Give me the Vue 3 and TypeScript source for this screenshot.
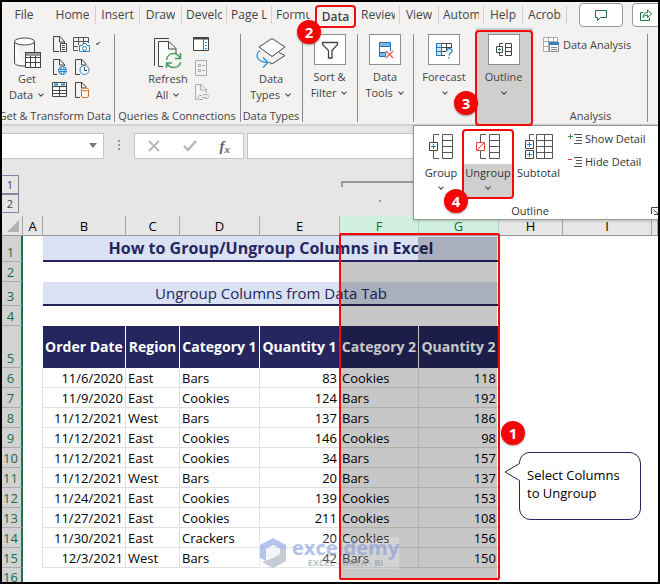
<script setup lang="ts">
interface Tab {
  label: string
  active?: boolean
  plain?: boolean
}

interface Order {
  date: string
  region: string
  category1: string
  quantity1: number
  category2: string
  quantity2: number
}

const tabs: Tab[] = [
  { label: 'File', plain: true },
  { label: 'Home' },
  { label: 'Insert' },
  { label: 'Draw' },
  { label: 'Develo' },
  { label: 'Page L' },
  { label: 'Formu', plain: true },
  { label: 'Data', active: true, plain: true },
  { label: 'Review' },
  { label: 'View' },
  { label: 'Autom' },
  { label: 'Help' },
  { label: 'Acrob' },
]

const columns = ['A', 'B', 'C', 'D', 'E', 'F', 'G', 'H', 'I']
const headings = ['Order Date', 'Region', 'Category 1', 'Quantity 1', 'Category 2', 'Quantity 2']

const orders: Order[] = [
  { date: '11/6/2020', region: 'East', category1: 'Bars', quantity1: 83, category2: 'Cookies', quantity2: 118 },
  { date: '11/9/2020', region: 'East', category1: 'Cookies', quantity1: 124, category2: 'Bars', quantity2: 192 },
  { date: '11/12/2021', region: 'West', category1: 'Bars', quantity1: 137, category2: 'Bars', quantity2: 186 },
  { date: '11/12/2021', region: 'East', category1: 'Cookies', quantity1: 146, category2: 'Cookies', quantity2: 98 },
  { date: '11/12/2021', region: 'East', category1: 'Cookies', quantity1: 34, category2: 'Bars', quantity2: 157 },
  { date: '11/12/2021', region: 'West', category1: 'Bars', quantity1: 20, category2: 'Bars', quantity2: 137 },
  { date: '11/24/2021', region: 'East', category1: 'Cookies', quantity1: 139, category2: 'Cookies', quantity2: 153 },
  { date: '11/27/2021', region: 'East', category1: 'Cookies', quantity1: 211, category2: 'Cookies', quantity2: 108 },
  { date: '11/30/2021', region: 'East', category1: 'Crackers', quantity1: 20, category2: 'Cookies', quantity2: 156 },
  { date: '12/3/2021', region: 'West', category1: 'Bars', quantity1: 42, category2: 'Bars', quantity2: 150 },
]
</script>

<template>
  <main class="window">
    <nav class="tabs">
      <button v-for="tab in tabs" :key="tab.label" class="tab" :class="{ active: tab.active, plain: tab.plain }">
        <span>{{ tab.label }}</span>
      </button>
      <div class="actions">
        <button class="action" aria-label="Comments">
          <svg width="14" height="14" viewBox="0 0 14 14" fill="none" stroke="#217346"><path d="M1.500 2.500H12.500V9.500H6.500L3.500 12.500V9.500H1.500Z" /></svg>
        </button>
        <button class="action share" aria-label="Share">
          <svg width="14" height="14" viewBox="0 0 14 14" fill="none" stroke="#217346"><path d="M4.500 4.500H1.500V12.500H10.500V9.500M4 9.500C4.500 6 6 4.500 8.500 4.500V2L12.500 5.700L8.500 9.500V7C6.500 7 5 7.800 4 9.500Z" /></svg>
        </button>
      </div>
    </nav>

    <section class="ribbon">
      <div class="group get-group">
        <div class="tools">
          <button class="big">
            <svg width="28" height="33" viewBox="15 37 28 33" fill="none" stroke="#444">
              <path d="M16.500 41.500V63C17 65 21 66 27 66M36.500 41.500V52" fill="#fafafa" />
              <ellipse cx="26.500" cy="41.500" rx="10" ry="3.500" fill="#fff" />
              <path d="M27.500 52.500H42.500V67.500H27.500Z" fill="#fff" /><path d="M28 54.500H42" stroke="#999" stroke-width="3" />
              <path d="M27.500 57.500H42.500M27.500 62.500H42.500M32.500 56V67M37.500 56V67M27.500 52.500H42.500V67.500H27.500Z" />
            </svg>
            <span>Get</span><span>Data <i class="chevron"></i></span>
          </button>
          <div class="smalls pair">
            <button aria-label="From text">
              <svg width="18" height="18" viewBox="51 35 18 18" fill="none" stroke="#444"><path d="M59 51.500H53.500V36.500H60L64.500 41.500V43M59.500 36.500V42H64" /><path d="M60.500 43.500H66.500V51.500H60.500Z" fill="#fff" /><path d="M62 45.500H65M62 47.500H65M62 49.500H65" /></svg>
            </button>
            <button class="with-chevron" aria-label="From picture">
              <svg width="18" height="18" viewBox="73 35 18 18" fill="none" stroke="#555"><path d="M73.500 37.500H88.500V43M73.500 37.500V50.500H78M73.500 41.500H88.500M73.500 46.500H78M78.500 37V45M83.500 37V43" /><path d="M79.500 45.500H82L83 43.500H86L87 45.500H89.500V51.500H79.500Z" fill="#fff" stroke="#2483cc" /><circle cx="84.500" cy="48.500" r="2" stroke="#2483cc" /></svg>
              <i class="chevron"></i>
            </button>
            <button aria-label="From web">
              <svg width="18" height="18" viewBox="51 58 18 18" fill="none" stroke="#444"><path d="M57 74.500H53.500V59.500H60L64.500 64.500V66M59.500 59.500V65H64" /><circle cx="62.500" cy="70.500" r="4" fill="#fff" stroke="#2483cc" /><ellipse cx="62.500" cy="70.500" rx="1.700" ry="4" stroke="#2483cc" /><path d="M58.500 69.500H66.500M58.500 71.500H66.500" stroke="#2483cc" /></svg>
            </button>
            <button aria-label="Recent sources">
              <svg width="18" height="18" viewBox="73 58 18 18" fill="none" stroke="#444"><path d="M80 74.500H75.500V59.500H82L86.500 64.500M81.500 59.500V65H86" /><circle cx="84.500" cy="70" r="4.500" fill="#fff" stroke="#2483cc" /><path d="M84.500 67V70.500H87" /></svg>
            </button>
            <button aria-label="From table">
              <svg width="18" height="18" viewBox="50 81 18 18" fill="none" stroke="#444"><path d="M51.500 82.500H65.500V96.500H51.500Z" fill="#fff" /><path d="M51.500 86.500H65.500M51.500 90.500H65.500M51.500 93.500H65.500M58.500 87V96" /><path d="M53 84.500H57M60 84.500H64" stroke="#2483cc" stroke-width="2" /></svg>
            </button>
            <button aria-label="Existing connections">
              <svg width="18" height="18" viewBox="73 81 18 18" fill="none" stroke="#444"><path d="M80 97.500H75.500V82.500H82L86.500 87.500M81.500 82.500V88H86" /><path d="M81.500 89.500V96.500C82 98 88 98 88.500 96.500V89.500" fill="#fff" stroke="#d96a12" /><ellipse cx="85" cy="89.500" rx="3.500" ry="1.500" fill="#fff" stroke="#d96a12" /></svg>
            </button>
          </div>
        </div>
        <footer>Get &amp; Transform Data</footer>
      </div>

      <div class="group query-group">
        <div class="tools">
          <button class="big">
            <svg width="30" height="33" viewBox="155 37 30 33" fill="none" stroke="#444">
              <path d="M157 65.500H156.500V38.500H171" /><path d="M165 66.500H160.500V41.500H171L178 48.500V54M170.500 41.500V49H178" fill="#fafafa" />
              <path d="M168.500 60C169 56 172 53.500 175.500 53.500C178.500 53.500 180.500 55 182 58M182.500 53V58.500H177M182.500 62C182 65.500 179 67.500 175.500 67.500C172.500 67.500 170.500 66 169 63.500M168.500 68V63H174" stroke="#3fa45b" stroke-width="1.500" />
            </svg>
            <span>Refresh</span><span>All <i class="chevron"></i></span>
          </button>
          <div class="smalls">
            <button aria-label="Queries pane">
              <svg width="18" height="18" viewBox="191 36 18 18" fill="none" stroke="#444"><path d="M192.500 38.500H207.500V51.500H192.500Z" fill="#fff" /><path d="M192 39.500H208" stroke-width="2" /><path d="M202.500 40V51M204 43.500H206M204 46.500H206M204 49.500H206" stroke="#2483cc" /></svg>
            </button>
            <button aria-label="Properties" disabled>
              <svg width="18" height="18" viewBox="191 59 18 18" fill="none" stroke="#aaa"><path d="M194.500 61.500H205.500V76.500H194.500Z" /><path d="M197.500 65.500H199.500V67.500H197.500ZM197.500 70.500H199.500V72.500H197.500ZM201 66.500H204M201 71.500H204" /></svg>
            </button>
            <button aria-label="Edit links" disabled>
              <svg width="18" height="19" viewBox="191 82 18 19" fill="none" stroke="#aaa"><path d="M197 100.500H194.500V85.500H200L205.500 90.500V94M199.500 85.500V91H205" /><path d="M201 96.500H199C196.500 97 196.500 100 199 100.500H202M202 95.500H206C208 96 208 99 206 99.500H204M201 98.500H205" /></svg>
            </button>
          </div>
        </div>
        <footer>Queries &amp; Connections</footer>
      </div>

      <div class="group">
        <div class="tools">
          <button class="big">
            <svg width="32" height="33" viewBox="254 37 32 33" fill="none" stroke="#444">
              <path d="M271 38.500L284 47L271 56.500L258 47Z" fill="#fafafa" /><path d="M278 52.500L284 55.500L271 64L268 62" />
              <path d="M259 50.500C254 54 255 62.500 267 62.500M262 57.500L267 62.500L262 67.500" stroke="#2f91d8" stroke-width="1.300" />
            </svg>
            <span>Data</span><span>Types <i class="chevron"></i></span>
          </button>
        </div>
        <footer>Data Types</footer>
      </div>

      <div class="group">
        <button class="tile-button">
          <span class="tile"><svg width="24" height="24" viewBox="318 37 24 24" fill="none" stroke="#444" stroke-width="1.300"><path d="M322.500 41.500H337.500V43.500L332 49.500V57H328.500V49.500L322.500 43.500Z" /></svg></span>
          <span>Sort &amp;</span><span>Filter <i class="chevron"></i></span>
        </button>
      </div>

      <div class="group">
        <button class="tile-button">
          <span class="tile"><svg width="24" height="24" viewBox="373 37 24 24" fill="none"><path d="M379.500 41.500H390.500V45.500H379.500ZM379.500 51.500H385.500V55.500H379.500Z" fill="#78b8e8" stroke="#1f6eb5" /><path d="M379.500 45.500V51.500H385M390.500 45.500V50" stroke="#1f6eb5" /><path d="M386 50L393 57M393 50L386 57" stroke="#ee5558" stroke-width="1.300" /></svg></span>
          <span>Data</span><span>Tools <i class="chevron"></i></span>
        </button>
      </div>

      <div class="group unruled">
        <button class="tile-button">
          <span class="tile"><svg width="24" height="24" viewBox="432 37 24 24" fill="none"><path d="M436.500 42.500H451.500V47M436.500 42.500V54.500H445M436.500 46.500H451.500M436.500 50.500H446M441.500 42V54M446.500 42V50" stroke="#444" /><path d="M436.500 42.500H441.500V54.500H436.500Z" fill="#cce5f7" stroke="#2374bb" /><path d="M437 46.500H441M437 50.500H441" stroke="#2374bb" /><path d="M446.500 50.500C446.500 47 452 46.500 452 50C452 52 449 52 449 54.500M449 56V57.500" stroke="#2483cc" stroke-width="1.300" /></svg></span>
          <span>Forecast</span><span><i class="chevron"></i></span>
        </button>
      </div>

      <div class="group unruled outline-group">
        <button class="tile-button">
          <span class="tile"><svg width="24" height="24" viewBox="492 37 24 24" fill="none" stroke="#444"><path d="M496.500 45.500H502.500V51.500H496.500Z" fill="#fff" /><path d="M498 48.500H501M499.500 47V50" stroke="#2483cc" /><path d="M499.500 45V42.500H503M499.500 52V54.500H503M505.500 42.500H511.500V54.500H505.500ZM505.500 46.500H511.500M505.500 50.500H511.500" /></svg></span>
          <span>Outline</span><span><i class="chevron"></i></span>
        </button>
      </div>

      <div class="group analysis-group">
        <button class="analysis">
          <svg width="17" height="16" viewBox="544 37 17 16" fill="none" stroke="#aaa"><path d="M544.500 37.500H558.500V51.500H544.500ZM544.500 41.500H558.500M544.500 46.500H558.500M549.500 37V51M554.500 37V51" fill="#fff" /><path d="M550.500 43.500H559.500V51.500H550.500ZM552 47.500H558M552 49.500H558" fill="#fff" stroke="#888" /><path d="M550 43.500H560" stroke="#3382bd" stroke-width="3" /></svg>
          Data Analysis
        </button>
        <footer>Analysis</footer>
      </div>
    </section>

    <section class="formula-bar">
      <div class="name-box">
        <input type="text" aria-label="Name box" />
        <svg width="8" height="5" viewBox="0 0 8 5"><path d="M0 0H8L4 5Z" fill="#777" /></svg>
      </div>
      <svg class="dots" width="3" height="11" viewBox="0 0 3 11" fill="#999"><path d="M0 0H2V2H0ZM0 4H2V6H0ZM0 8H2V10H0Z" /></svg>
      <div class="entry-buttons">
        <button aria-label="Cancel"><svg width="12" height="12" viewBox="0 0 12 12"><path d="M1 1L11 11M11 1L1 11" stroke="#b9b9b9" stroke-width="2" /></svg></button>
        <button aria-label="Enter"><svg width="14" height="12" viewBox="0 0 14 12"><path d="M1 6L5 10L13 1" fill="none" stroke="#b9b9b9" stroke-width="2.500" /></svg></button>
        <button class="fx">f<sub>x</sub></button>
      </div>
      <input class="formula" type="text" aria-label="Formula" />
    </section>

    <section class="levels">
      <div class="level-buttons"><button>1</button><button>2</button></div>
      <div class="bracket"><i></i></div>
    </section>

    <section class="sheet">
      <table>
        <colgroup>
          <col class="w-row" /><col class="w-a" /><col class="w-b" /><col class="w-c" /><col class="w-d" /><col class="w-d" />
          <col class="w-f" /><col class="w-d" /><col class="w-h" /><col class="w-i" /><col />
        </colgroup>
        <thead>
          <tr class="letters">
            <th><svg width="12" height="12" viewBox="0 0 12 12"><path d="M12 0V12H0Z" fill="#b2b2b2" /></svg></th>
            <th v-for="c in columns" :key="c" :class="{ picked: c === 'F' || c === 'G' }" scope="col">{{ c }}</th>
            <th></th>
          </tr>
        </thead>
        <tbody>
          <tr class="title-row"><th scope="row">1</th><td></td><td class="banner title" colspan="6">How to Group/Ungroup Columns in Excel</td><td colspan="3"></td></tr>
          <tr class="short-row"><th scope="row">2</th><td colspan="10"></td></tr>
          <tr class="subtitle-row"><th scope="row">3</th><td></td><td class="banner subtitle" colspan="6">Ungroup Columns from Data Tab</td><td colspan="3"></td></tr>
          <tr class="short-row"><th scope="row">4</th><td colspan="10"></td></tr>
          <tr class="heading-row">
            <th scope="row">5</th><td></td>
            <th v-for="h in headings" :key="h" class="heading" scope="col">{{ h }}</th>
            <td colspan="3"></td>
          </tr>
          <tr v-for="(o, i) in orders" :key="i" class="data-row">
            <th scope="row">{{ i + 6 }}</th>
            <td class="edge"></td>
            <td class="cell number">{{ o.date }}</td>
            <td class="cell">{{ o.region }}</td>
            <td class="cell">{{ o.category1 }}</td>
            <td class="cell number">{{ o.quantity1 }}</td>
            <td class="cell">{{ o.category2 }}</td>
            <td class="cell number">{{ o.quantity2 }}</td>
            <td colspan="3"></td>
          </tr>
          <tr class="last-row"><th scope="row"><div>16</div></th><td colspan="10"></td></tr>
        </tbody>
      </table>

      <div class="shade shade-f"></div>
      <div class="shade shade-g"></div>
      <div class="watermark">
        <svg width="28" height="32" viewBox="0 0 28 32"><path d="M14 1L27 8V15L14 8L7 12V24L1 21V8Z" fill="#8fa6e6" /><path d="M14 9L21 13V20L14 24L7 20V13Z" fill="#eef1f7" /><path d="M27 11V24L14 31L3 25L14 21L21 17V12Z" fill="#a9b1bf" /></svg>
        <div><strong>exceldemy</strong><small>EXCEL - DATA - BI</small></div>
      </div>
      <div class="selection"></div>
      <aside class="callout">
        <svg width="138" height="70" viewBox="0 0 138 70" fill="#fff" stroke="#26265e"><path d="M26 1.500H125A11 11 0 0 1 136.500 12V58A11 11 0 0 1 125 68.500H27A11 11 0 0 1 15.500 58V29.500L1 21L15.500 12.500C15.500 6 20 1.500 26 1.500Z" /></svg>
        <p>Select Columns<br />to Ungroup</p>
      </aside>
      <span class="badge badge-1">1</span>
    </section>

    <section class="popover">
      <div class="popover-tools">
        <button class="choice">
          <svg width="26" height="28" viewBox="429 131 26 28" fill="none" stroke="#555"><path d="M434.500 141V133.500H440M434.500 150V157.500H440M443.500 133.500H453.500V157.500H443.500ZM443.500 139.500H453.500M443.500 145.500H453.500M443.500 151.500H453.500" /><path d="M430.500 141.500H438.500V149.500H430.500Z" fill="#fff" stroke="#444" /><path d="M432 145.500H437M434.500 143V148" stroke="#2483cc" /></svg>
          <span>Group</span><i class="chevron"></i>
        </button>
        <button class="choice ungroup">
          <svg width="26" height="28" viewBox="476 131 26 28" fill="none" stroke="#555"><path d="M481.500 141V133.500H487M481.500 150V157.500H487M490.500 133.500H500.500V157.500H490.500ZM490.500 139.500H500.500M490.500 145.500H500.500M490.500 151.500H500.500" /><path d="M477.500 141.500H485.500V149.500H477.500ZM478 149L485 142" fill="#fff" stroke="#ed4545" /></svg>
          <span>Ungroup</span><i class="chevron"></i>
        </button>
        <button class="choice">
          <svg width="30" height="28" viewBox="524 131 30 28" fill="none" stroke="#555"><path d="M529.500 139V133.500H534M536.500 133.500H552.500V157.500H536.500ZM536.500 139.500H552.500M536.500 145.500H552.500M536.500 151.500H552.500M544.500 133V157" /><path d="M525.500 139.500H533.500V147.500H525.500ZM525.500 149.500H533.500V157.500H525.500Z" fill="#fff" stroke="#444" /><path d="M527 143.500H532M529.500 141V146M527 153.500H532M529.500 151V156" stroke="#2483cc" /></svg>
          <span>Subtotal</span>
        </button>
        <div class="details">
          <button><svg width="14" height="12" viewBox="0 0 14 12"><path d="M0 3.500H5M2.500 1V6" stroke="#2e9e4f" /><path d="M6 1.500H14M8 4.500H14M8 7.500H14M6 10.500H14" stroke="#555" /></svg>Show Detail</button>
          <button><svg width="14" height="12" viewBox="0 0 14 12"><path d="M0 3.500H4" stroke="#e33" /><path d="M6 1.500H14M8 4.500H14M8 7.500H14M6 10.500H14" stroke="#555" /></svg>Hide Detail</button>
        </div>
      </div>
      <footer>
        <span>Outline</span>
        <button aria-label="Outline settings"><svg width="8" height="8" viewBox="0 0 8 8" fill="none" stroke="#444"><path d="M.500 7V.500H7M2.500 2.500L7 7M7.500 3V7.500H3" /></svg></button>
      </footer>
    </section>
    <div class="mark-outline"></div>
    <span class="badge badge-2">2</span>
    <span class="badge badge-3">3</span>
    <span class="badge badge-4">4</span>
  </main>
</template>

<style>
body { background: #fff; }
</style>

<style scoped>
* { box-sizing: border-box; }
button, input { margin: 0; padding: 0; border: 0; background: none; color: inherit; font: inherit; }
svg { display: block; flex: none; }
.window {
  position: relative;
  overflow: hidden;
  border: 2px solid #000;
  background: #e6e6e6;
  color: #444;
  font-family: "Open Sans", "Noto Sans", sans-serif;
  font-size: 11px;
  line-height: 16px;
}

.tabs {
  display: grid;
  grid-template-columns: 48px 46px 44px 42px 45px 45px 42px 43px 43px 39px 45px 39px 44px 1fr;
  height: 26px;
  background: #f3f2f1;
  font-size: 12px;
}
.tab { display: flex; align-items: center; min-width: 0; margin: 4px 0; padding: 0 4px; border-right: 1px solid #d2d0ce; white-space: nowrap; }
.tab span { overflow: hidden; margin: auto; }
.tab:first-child { padding-right: 8px; }
.tab.plain { border-right: 0; }
.tab.active { margin: 3px 1px 0; padding: 0; border: 2px solid #ee1010; border-radius: 4px; font-weight: 600; }
.actions { display: flex; gap: 9px; padding: 1px 0 0 12px; }
.action { display: flex; flex: none; align-items: center; justify-content: center; width: 44px; height: 24px; border: 1px solid #999; border-radius: 4px; background: #fff; }
.action.share { padding-right: 16px; }

.ribbon {
  display: grid;
  grid-template-columns: 113px 126px 62px 55px 56px 62px 57px 115px 1fr;
  height: 98px;
  border-bottom: 2px solid #d2d2d2;
  background: #f3f2f1;
}
.group { position: relative; display: flex; flex-direction: column; min-width: 0; padding: 6px 2px 0 0; white-space: nowrap; }
.group::after { content: ""; position: absolute; top: 6px; right: 0; bottom: 2px; width: 1px; background: #8a8a8a; }
.group.unruled::after { content: none; }
.group footer { margin-top: auto; align-self: center; }
.get-group footer { align-self: flex-end; margin-right: 2px; }
.tools { display: flex; justify-content: center; }
.get-group .tools { justify-content: flex-start; gap: 3px; }
.query-group .tools { gap: 4px; padding-left: 4px; }
.big { display: flex; flex-direction: column; align-items: center; padding-top: 3px; }
.get-group .big { width: 46px; padding-left: 4px; }
.big svg { margin-bottom: 1px; }
.smalls { display: grid; grid-auto-rows: 23px; align-content: start; padding-top: 1px; }
.smalls.pair { grid-template-columns: 22px 28px; }
.smalls button { display: flex; align-items: flex-start; }
.smalls .with-chevron { gap: 3px; }
.with-chevron .chevron { margin-top: 6px; }
.chevron { display: inline-block; width: 4px; height: 4px; margin: 0 2px 3px 3px; border: solid #444; border-width: 0 1px 1px 0; rotate: 45deg; }
.tile-button { display: flex; flex-direction: column; align-items: center; width: 100%; }
.tile { display: flex; align-items: center; justify-content: center; width: 32px; height: 31px; margin-bottom: 4px; border: 1px solid #8f8f8f; background: #fff; }
.outline-group { background: #d0cfce; }
.analysis-group { padding-left: 10px; }
.analysis { display: flex; align-items: center; gap: 3px; height: 22px; }
.analysis-group footer { margin-right: 8px; }

.formula-bar { display: flex; align-items: center; height: 38px; padding-top: 1px; }
.name-box { display: flex; align-items: center; width: 102px; height: 26px; padding-right: 6px; border: 1px solid #c4c4c4; border-left: 0; background: #fff; }
.name-box input { flex: 1; min-width: 0; }
.dots { margin: 0 13px 0 14px; }
.entry-buttons { display: flex; align-items: center; justify-content: space-between; width: 110px; height: 26px; padding: 0 13px; border: 1px solid #c4c4c4; background: #fff; }
.fx { color: #666; font: italic bold 15px/18px "Liberation Serif", serif; }
.fx sub { font-size: 11px; line-height: 1px; vertical-align: -2px; }
.formula { flex: 1; height: 26px; margin-left: 3px; border: 1px solid #c4c4c4; background: #fff; }

.levels { display: grid; grid-template-columns: 339px 80px; height: 52px; padding-top: 11px; }
.level-buttons button { display: block; width: 17px; height: 19px; border: 1px solid #8085a0; border-left: 0; }
.bracket { position: relative; height: 6px; margin-top: 6px; border: solid #999; border-width: 2px 0 0 2px; }
.bracket i { position: absolute; top: 17px; left: 36px; width: 2px; height: 2px; background: #999; }

.sheet { position: relative; background: #fff; color: #000; font-size: 13px; line-height: 18px; }
table { width: 100%; border-collapse: separate; border-spacing: 0; table-layout: fixed; }
th, td { overflow: hidden; padding: 0; font-weight: 400; text-align: left; white-space: nowrap; }
.w-row { width: 21px; } .w-a { width: 20px; } .w-b { width: 83px; } .w-c { width: 54px; }
.w-d { width: 80px; } .w-f { width: 79px; } .w-h { width: 64px; } .w-i { width: 89px; }
.letters th { height: 20px; border-right: 1px solid #a5a5a5; border-bottom: 1px solid #999; background: #e6e6e6; text-align: center; }
.letters th svg { margin: 0 0 0 5px; }
.letters .picked { border-right-color: #b2d8c6; background: #d2f0e0; color: #1c6b42; }
tbody th[scope="row"] { padding-right: 2px; border-right: 2px solid #217346; border-bottom: 1px solid #aaa; background: #d2d2d2; color: #1c6b42; text-align: center; vertical-align: bottom; }
.title-row > * { height: 26px; }
.short-row > * { height: 20px; }
.subtitle-row > * { height: 24px; }
.heading-row > * { height: 42px; }
.data-row > * { height: 20px; }
.banner { border-bottom: 2px solid #26265e; background: #d9e1f2; color: #26265e; text-align: center; vertical-align: middle; }
.title { font-size: 16px; font-weight: 700; line-height: 24px; }
.subtitle { font-size: 15px; line-height: 22px; }
.heading { border-right: 1px solid #fff; background: #26265e; color: #fff; font-size: 14px; font-weight: 700; text-align: center; }
.cell { padding: 0 2px; border: solid #e0e0e0; border-width: 0 1px 1px 0; }
.edge { border-right: 1px solid #e0e0e0; }
.number { text-align: right; }
.last-row div { height: 14px; overflow: hidden; }
.last-row th[scope="row"] { border-bottom: 0; }

.shade { position: absolute; bottom: 2px; background: rgb(0 0 0 / 22%); }
.shade-f { top: 46px; left: 339px; width: 77px; }
.shade-g { top: 21px; left: 416px; width: 79px; }
.selection { position: absolute; top: 17px; bottom: 2px; left: 337px; width: 161px; border: 2px solid #f50a0a; border-radius: 2px; }
.watermark { position: absolute; bottom: 13px; left: 257px; display: flex; align-items: center; gap: 5px; opacity: .65; background: rgb(255 255 255 / 35%); color: #8ea4e2; }
.watermark div { display: flex; flex-direction: column; align-items: center; }
.watermark strong { font-size: 20px; line-height: 20px; }
.watermark small { color: #9ba0a8; font-size: 9px; font-weight: 700; line-height: 10px; }
.callout { position: absolute; top: 235px; left: 502px; width: 138px; }
.callout p { position: absolute; top: 15px; left: 23px; margin: 0; white-space: nowrap; }

.badge { position: absolute; display: flex; align-items: center; justify-content: center; width: 24px; height: 24px; border-radius: 50%; background: #f50505; box-shadow: 0 1px 2px rgb(0 0 0 / 40%); color: #fff; font-size: 15px; font-weight: 700; line-height: 20px; }
.badge-1 { top: 205px; left: 499px; }
.badge-2 { top: 18px; left: 295px; }
.badge-3 { top: 89px; left: 452px; }
.badge-4 { top: 187px; left: 442px; }
.mark-outline { position: absolute; top: 28px; left: 473px; width: 58px; height: 96px; border: 2px solid #f50a0a; border-radius: 4px; }

.popover { position: absolute; top: 123px; right: 0; left: 411px; padding: 3px 0 0; border: 1px solid #999; border-right: 0; background: #fff; color: #333; box-shadow: 0 1px 3px rgb(0 0 0 / 20%); }
.popover-tools { display: grid; grid-template-columns: 48px 52px 49px 1fr; height: 74px; white-space: nowrap; }
.choice { display: flex; flex-direction: column; align-items: center; height: 70px; padding-top: 3px; }
.choice:first-child { padding-left: 6px; }
.choice svg { margin-bottom: 5px; }
.choice .chevron { margin: 4px 0 0; }
.ungroup { border: 2px solid #f50a0a; border-radius: 4px; padding-top: 1px; background: linear-gradient(#fff 33px, #d0cfce 33px); }
.details { padding: 1px 0 0 5px; }
.details button { display: flex; align-items: center; gap: 3px; height: 23px; padding-bottom: 5px; }
.popover footer { display: grid; grid-template-columns: 232px 1fr; align-items: center; text-align: center; }
.popover footer button { margin-left: 5px; }
</style>
